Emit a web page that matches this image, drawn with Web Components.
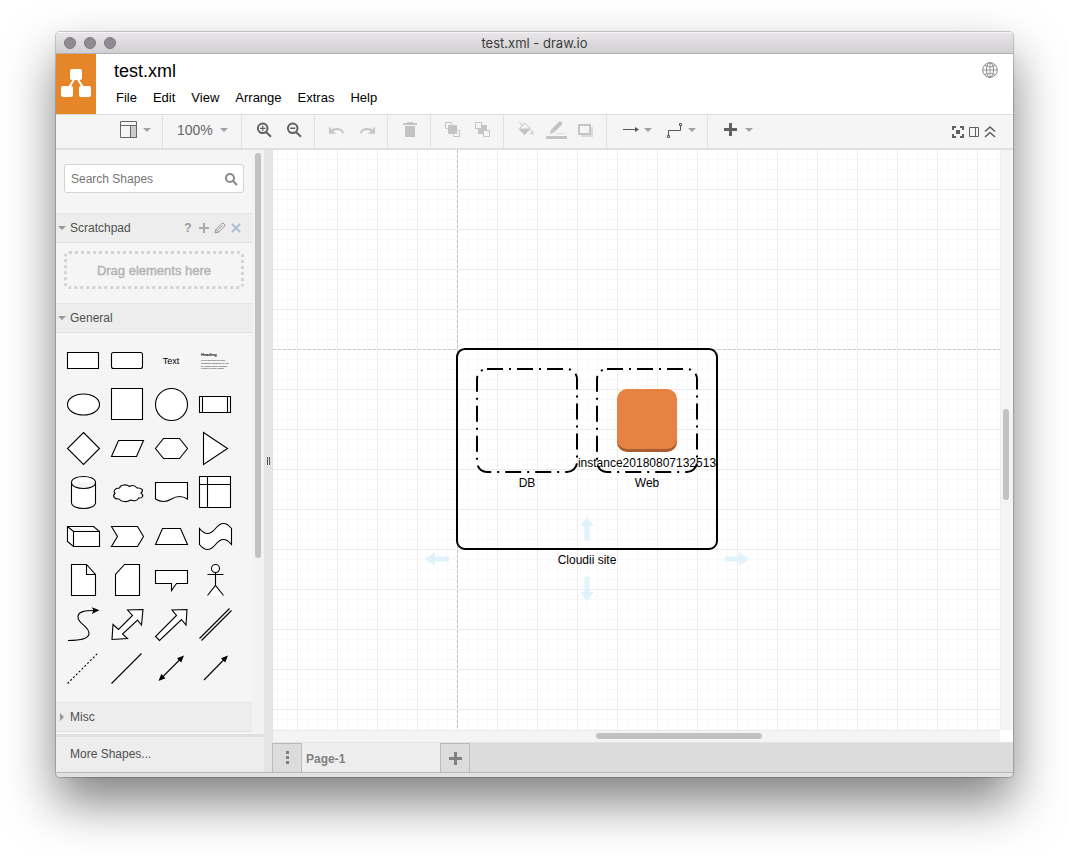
<!DOCTYPE html>
<html lang="en">
<head>
<meta charset="utf-8">
<title>test.xml - draw.io</title>
<style>
  body { margin: 0; background: #fff; font-family: "Liberation Sans", Arial, sans-serif; font-size: 13px; color: #000; }
</style>
</head>
<body>
<app-window>
  <title-bar slot="title">test.xml - draw.io</title-bar>
  <app-header slot="header"></app-header>
  <tool-bar slot="toolbar"></tool-bar>
  <shape-sidebar slot="sidebar"></shape-sidebar>
  <diagram-canvas slot="canvas"></diagram-canvas>
  <page-tabs slot="tabs"></page-tabs>
</app-window>

<script>
const define = (name, html, setup) => {
  const template = document.createElement('template');
  template.innerHTML = html;
  customElements.define(name, class extends HTMLElement {
    constructor() {
      super();
      this.attachShadow({ mode: 'open' });
    }
    connectedCallback() {
      if (this.shadowRoot.childNodes.length) return;
      this.shadowRoot.append(template.content.cloneNode(true));
      if (setup) setup(this, this.shadowRoot);
    }
  });
};

const RESET = `
  *, *::before, *::after { box-sizing: border-box; }
  button, input, select { font: inherit; color: inherit; margin: 0; padding: 0; border: 0; background: none; outline: none; appearance: none; }
  svg { display: block; flex: none; }
`;

const ICONS = {
  panels: '<g fill="none" stroke="#666"><path d="M11.500 5.500h6v12h-6z" fill="#ccc"/><path d="M1.500 1.500h16v16h-16zM1.500 5.500h16M11.500 5.500v12"/></g>',
  zoomin: '<g fill="none" stroke="#606060" stroke-width="2"><circle cx="8.7" cy="8.3" r="4.8"/><path d="M12 12l5 4.8"/></g><path d="M6 8.3h5.4M8.7 5.6v5.4" stroke="#606060" stroke-width="1.2"/>',
  zoomout: '<g fill="none" stroke="#606060" stroke-width="2"><circle cx="8.7" cy="8.3" r="4.8"/><path d="M12 12l5 4.8"/></g><path d="M6.2 8.3h5" stroke="#606060" stroke-width="1.4"/>',
  undo: '<path fill="#c6c6c6" d="M2 6.5v7.3h7l-2.5-2.7c1-.8 2.2-1.2 3.5-1.2 2.6 0 4.8 1.5 5.6 3.8l1.7-.6c-1.1-3.2-3.9-5.3-7.3-5.3-2 0-3.9.7-5.3 1.9z"/>',
  redo: '<path fill="#c6c6c6" d="M18 6.5v7.3h-7l2.5-2.7c-1-.8-2.2-1.2-3.5-1.2-2.6 0-4.8 1.5-5.6 3.8l-1.7-.6c1.1-3.2 3.9-5.3 7.3-5.3 2 0 3.9.7 5.3 1.9z"/>',
  trash: '<path fill="#c4c4c4" d="M7 2h6v1h4v2H3V3h4zM5 6h10v11H5z"/>',
  front: '<g fill="none" stroke="#c4c4c4"><path d="M4.5 8.500h-2v-6h6v2M16.500 10.500v6h-6v-2M14.500 10.500h2"/></g><path fill="#c4c4c4" d="M5 5h9v9H5z"/>',
  back: '<path fill="#c4c4c4" d="M5 5h9v9H5z"/><g fill="#f5f5f5" stroke="#c4c4c4"><path d="M2.500 2.500h6v6h-6zM10.500 10.500h6v6h-6z"/></g>',
  fill: '<path d="M3 1.500l4.500 4.500M4 8L8.500 3l6 5.500" fill="none" stroke="#c4c4c4"/><path fill="#c4c4c4" d="M2 8.500h13l-6.500 6.700z"/><path d="M16 9.500c1 1.300 2 2.200 2 3.400a2 2 0 01-4 0c0-1.200 1-2.100 2-3.400z" fill="#dadada"/>',
  line: '<path fill="#c4c4c4" d="M0 16h21v3H0zM4 14l1.200-4.200L12.800 2c1.500-1.500 4.500 1 3.200 2.800L8.500 12z"/><path d="M10 13.500h8" stroke="#ddd"/>',
  shadow: '<path fill="#dadada" d="M5 7h12v10H5z"/><path d="M3 5h11v9H3z" fill="#f5f5f5" stroke="#c4c4c4" stroke-width="2"/>',
  arrow: '<path d="M3 9.500h14" stroke="#555"/><path d="M15 7v5l4-2.500z" fill="#555"/>',
  route: '<path d="M4.500 15V10.500h12V6" fill="none" stroke="#555"/><path d="M3.500 15.500h2v2h-2zM15.500 3.500h2v2h-2z" fill="#f5f5f5" stroke="#555"/>',
  plus: '<path fill="#606060" d="M8 3h3v5h5v3h-5v5H8v-5H3V8h5z"/>',
  full: '<path fill="#606060" d="M2 2h4v2H4v2H2zM10 2h4v4h-2V4h-2zM2 10h2v2h2v2H2zM12 10h2v4h-4v-2h2zM6 6h4v4H6z"/>',
  format: '<path d="M3.500 3.500h9v9h-9zM9.500 3.500v9" fill="none" stroke="#606060"/>',
  collapse: '<path d="M3 7.500l5-4.500 5 4.500M3 13l5-4.500 5 4.500" fill="none" stroke="#606060" stroke-width="1.600"/>'
};

define('app-window', `
<style>${RESET}
  :host { display: flex; min-height: 100vh; padding: 32px 56px 80px; box-sizing: border-box; }
  .frame { flex: 1; min-width: 0; display: flex; flex-direction: column; border-radius: 4px; overflow: hidden; background: #e2e2e2;
    box-shadow: 0 0 1px 1px rgba(0,0,0,.2), 0 25px 50px rgba(0,0,0,.5); }
  .main { flex: 1; min-height: 0; display: grid; grid-template-columns: 208px 8px minmax(0, 1fr); border-bottom: 1px solid #b8b8b8; }
  .split { background: #e4e4e4; display: flex; align-items: center; justify-content: center; gap: 1px; }
  .split i { width: 1px; height: 8px; background: #555; }
  .right { display: flex; flex-direction: column; min-width: 0; }
  .foot { height: 4px; }
</style>
<div class="frame">
  <slot name="title"></slot><slot name="header"></slot><slot name="toolbar"></slot>
  <div class="main">
    <slot name="sidebar"></slot>
    <div class="split"><i></i><i></i></div>
    <div class="right"><slot name="canvas"></slot><slot name="tabs"></slot></div>
  </div>
  <div class="foot"></div>
</div>`);

define('title-bar', `
<style>${RESET}
  :host { display: grid; grid-template-columns: 1fr auto 1fr; align-items: center; height: 22px; padding: 0 8px; box-sizing: border-box;
    background: linear-gradient(#e9e7e9, #d1cfd1); border-bottom: 1px solid #b1afb1; box-shadow: inset 0 1px #f6f5f6;
    font: 13px Inter, Roboto, sans-serif; color: #3c3c3c; }
  .lights { display: flex; gap: 8px; }
  .lights button { width: 12px; height: 12px; border-radius: 50%; background: #8e8c92; border: 1px solid #7b797f; }
</style>
<div class="lights"><button aria-label="Close"></button><button aria-label="Minimize"></button><button aria-label="Zoom"></button></div>
<span><slot></slot></span>`);

define('app-header', `
<style>${RESET}
  :host { display: flex; height: 61px; background: #fff; border-bottom: 1px solid #dcdcdc; box-sizing: border-box; }
  .logo { width: 40px; height: 60px; background: #e58629; }
  .text { flex: 1; padding: 6px 0 0 18px; }
  h1 { margin: 0 0 6px; font-size: 18px; line-height: 22px; font-weight: 400; }
  nav { display: flex; margin-left: -6px; }
  nav button { padding: 0 8px; line-height: 20px; }
  .lang { width: 16px; height: 16px; margin: 8px 15px 0 0; }
</style>
<svg class="logo" viewBox="0 0 40 60"><path d="M20 22L11 37M20 22l9 15" stroke="#fff" stroke-width="2"/><g fill="#fff"><rect x="14" y="15" width="12" height="11" rx="2"/><rect x="5" y="32" width="12" height="11" rx="2"/><rect x="23" y="32" width="12" height="11" rx="2"/></g></svg>
<div class="text">
  <h1>test.xml</h1>
  <nav><button>File</button><button>Edit</button><button>View</button><button>Arrange</button><button>Extras</button><button>Help</button></nav>
</div>
<button class="lang" aria-label="Language"><svg width="16" height="16" viewBox="0 0 16 16" fill="none" stroke="#888"><circle cx="8" cy="8" r="7.300"/><ellipse cx="8" cy="8" rx="3.500" ry="7.300"/><path d="M8 .7v14.600M.7 8h14.600M2.500 3.500q5.500 3 11 0M2.500 12.500q5.500-3 11 0" stroke-width=".8"/></svg></button>`);

define('tool-button', `
<style>${RESET}
  :host { display: block; }
  button { display: flex; align-items: center; justify-content: center; width: var(--tool-width, 30px); height: 30px; }
  :host([menu]) button { width: 44px; gap: 4px; }
</style>
<button></button>`, (host, root) => {
  const size = host.hasAttribute('small') ? 16 : 20;
  const button = root.querySelector('button');
  button.setAttribute('aria-label', host.getAttribute('label'));
  button.innerHTML = `<svg width="${size}" height="${size}" viewBox="0 0 ${size} ${size}" overflow="visible">${ICONS[host.getAttribute('icon')]}</svg>` +
    (host.hasAttribute('menu') ? '<svg width="8" height="4" viewBox="0 0 8 4"><path d="M0 0h8L4 4z" fill="#a2a2a2"/></svg>' : '');
});

define('tool-bar', `
<style>${RESET}
  :host { display: flex; height: 35px; background: #f5f5f5; border-bottom: 2px solid #e0e0e0; box-sizing: border-box; }
  .group { display: flex; align-items: flex-start; padding: 0 5px 0 7px; border-right: 1px solid #e0e0e0; }
  .group.first { padding-left: 57px; }
  .group.last { border: 0; }
  .zoom { display: flex; align-items: center; width: 66px; height: 30px; padding: 0 8px 0 7px; color: #666; font-size: 14px; }
  .zoom select { flex: 1; height: 20px; }
  .end { display: flex; margin-left: auto; padding: 2px 15px 0 0; --tool-width: 16px; }
</style>
<div class="group first"><tool-button icon="panels" label="View" menu></tool-button></div>
<div class="group"><label class="zoom"><select aria-label="Zoom"><option>100%</option></select><svg width="8" height="4" viewBox="0 0 8 4"><path d="M0 0h8L4 4z" fill="#a2a2a2"/></svg></label></div>
<div class="group"><tool-button icon="zoomin" label="Zoom In"></tool-button><tool-button icon="zoomout" label="Zoom Out"></tool-button></div>
<div class="group"><tool-button icon="undo" label="Undo"></tool-button><tool-button icon="redo" label="Redo"></tool-button></div>
<div class="group"><tool-button icon="trash" label="Delete"></tool-button></div>
<div class="group"><tool-button icon="front" label="To Front"></tool-button><tool-button icon="back" label="To Back"></tool-button></div>
<div class="group"><tool-button icon="fill" label="Fill Color"></tool-button><tool-button icon="line" label="Line Color"></tool-button><tool-button icon="shadow" label="Shadow"></tool-button></div>
<div class="group"><tool-button icon="arrow" label="Connection" menu></tool-button><tool-button icon="route" label="Waypoints" menu></tool-button></div>
<div class="group last"><tool-button icon="plus" label="Insert" menu></tool-button></div>
<div class="end"><tool-button small icon="full" label="Fullscreen"></tool-button><tool-button small icon="format" label="Format"></tool-button><tool-button small icon="collapse" label="Collapse"></tool-button></div>`);

define('palette-section', `
<style>${RESET}
  :host { display: block; }
  header { display: flex; align-items: center; height: 30px; padding: 0 8px 0 2px; background: #ededed; border-top: 1px solid #e5e5e5; border-bottom: 1px solid #e0e0e0; color: #505050; font-size: 12px; }
  .toggle { display: flex; align-items: center; gap: 4px; flex: 1; height: 28px; text-align: left; }
  .toggle svg { transform: rotate(-90deg); }
  :host([open]) .toggle svg { transform: none; }
</style>
<header><button class="toggle"><svg width="8" height="8" viewBox="0 0 8 8"><path d="M0 2h8L4 6z" fill="#999"/></svg><span></span></button><slot name="tools"></slot></header>
<slot></slot>`, (host, root) => { root.querySelector('span').textContent = host.getAttribute('heading'); });

const SHAPES = [
  ['Rectangle', '<path d="M6.5 14.500h31v16h-31z"/>'],
  ['Rounded Rectangle', '<rect x="6.5" y="14.500" width="31" height="16" rx="2"/>'],
  ['Text', '<text x="22" y="26" font-size="9" text-anchor="middle">Text</text>'],
  ['Textbox', '<text x="8" y="18" font-size="4" font-weight="700">Heading</text><g font-size="2"><text x="8" y="23">Lorem ipsum dolor sit amet,</text><text x="8" y="26">consectetur adipisicing elit, sed</text><text x="8" y="28.500">do eiusmod tempor incididunt</text><text x="8" y="31">ut labore et dolore magna.</text></g>'],
  ['Ellipse', '<ellipse cx="22.500" cy="22.500" rx="16" ry="10.500"/>'],
  ['Square', '<path d="M6.5 6.500h31v31h-31z"/>'],
  ['Circle', '<circle cx="22.500" cy="22.500" r="16"/>'],
  ['Process', '<path d="M6.5 14.500h31v16h-31zM9.500 14.500v16M34.500 14.500v16"/>'],
  ['Diamond', '<path d="M22.500 6.500l16 16-16 16-16-16z"/>'],
  ['Parallelogram', '<path d="M13.500 14.500h25l-7 16h-25z"/>'],
  ['Hexagon', '<path d="M14.500 12.500h16l8 10-8 10h-16l-8-10z"/>'],
  ['Triangle', '<path d="M10.500 6.500l24 16-24 16z"/>'],
  ['Cylinder', '<path d="M10.500 12.500c0-8 24-8 24 0v20c0 8-24 8-24 0zM10.500 12.500c0 8 24 8 24 0"/>'],
  ['Cloud', '<path d="M14.500 18c-5 0-6.500 3.500-4.500 5.500-3 2.500-.5 6 4 5.500 2.500 3 8 3.500 11.500 1 4 1.500 7.500.5 8-2 4.500.5 5.500-2.500 2.500-5 3-2.500 1-5.500-4-5-2-2.500-5-3-7.500-1.500-3-2.500-9-2-10 1.500z"/>'],
  ['Document', '<path d="M6.500 12.500h32v16.500q-8-5-16 0t-16 0z"/>'],
  ['Internal Storage', '<path d="M6.500 6.500h31v31h-31zM14.500 6.500v31M6.500 14.500h31"/>'],
  ['Cube', '<path d="M6.500 12.500h26l6 5v15h-26l-6-5zM6.500 12.500l6 5h26M12.500 17.500v15"/>'],
  ['Step', '<path d="M6.500 12.500h26l6 10-6 10h-26l6-10z"/>'],
  ['Trapezoid', '<path d="M13.500 14.500h18l7 16h-32z"/>'],
  ['Tape', '<path d="M6.500 14.500q8 10 16 0t16 0v16q-8-10-16 0t-16 0z"/>'],
  ['Note', '<path d="M10.500 6.500h15l9 10v21h-24zM25.500 6.500v10h9"/>'],
  ['Card', '<path d="M19.500 6.500h15v31h-24v-21z"/>'],
  ['Callout', '<path d="M6.500 12.500h32v13h-11l-5 7v-7h-16z"/>'],
  ['Actor', '<circle cx="22.500" cy="10.500" r="4"/><path d="M22.500 14.500v13M14.500 16.500h16M14.500 37.500l8-10 8 10"/>'],
  ['Curve', '<path fill="none" d="M7 38.500C22 38.500 28 36 28 31.500 28 24 17 22 17 15 17 10 22 8.500 34 8.500"/><path fill="#000" d="M37 8.300l-5-2 1.200 2.200-1.200 2.200z"/>'],
  ['Bidirectional Arrow', '<path d="M38 7.500l-1.500 15.500-4-5L17.500 32l5 4.500L7 37.500l1-15 5.500 5 14-14-5-5.500z"/>'],
  ['Arrow', '<path d="M38 7.500l-1 15.500-4.500-5.500-22 21-4-4 21-21-4.500-5.500z"/>'],
  ['Link', '<path d="M6.500 36.500l30-30M8.500 38.500l30-30"/>'],
  ['Dashed Line', '<path d="M6.500 37.500l30-30" stroke-dasharray="2 2"/>'],
  ['Line', '<path d="M6.500 37.500l30-30"/>'],
  ['Bidirectional Connector', '<path d="M11 33.500l22.500-22.500"/><path fill="#000" d="M34 10.500l-5 2 3 3zM10.500 34l5-2-3-3z"/>'],
  ['Directional Connector', '<path d="M11 34l22.500-23"/><path fill="#000" d="M34 10.500l-5 2 3 3z"/>']
];

define('shape-palette', `
<style>${RESET}
  :host { display: block; padding: 5px 5px 12px; }
  div { display: grid; grid-template-columns: repeat(4, 44px); grid-auto-rows: 44px; }
  svg { fill: #fff; stroke: #000; stroke-width: 1.1; }
  text { fill: #000; stroke: none; font-family: "Liberation Sans", Arial, sans-serif; }
</style>
<div></div>`, (host, root) => {
  root.querySelector('div').innerHTML = SHAPES.map(([name, art]) =>
    `<button aria-label="${name}"><svg width="44" height="44" viewBox="0 0 44 44">${art}</svg></button>`).join('');
});

define('shape-sidebar', `
<style>${RESET}
  :host { display: flex; flex-direction: column; min-width: 0; min-height: 0; background: #f5f5f5; }
  .scroll { flex: 1; display: grid; grid-template-columns: minmax(0, 1fr) 12px; }
  .track { background: #f2f2f2; padding: 3px; }
  .track i { display: block; height: 70%; border-radius: 3px; background: #c2c2c2; }
  .search { display: flex; align-items: center; height: 29px; margin: 14px 8px 20px; padding: 0 5px 0 6px; background: #fff; border: 1px solid #d3d3d3; border-radius: 3px; font-size: 12px; }
  .search input { flex: 1; min-width: 0; height: 20px; }
  .search input::placeholder { color: #757575; opacity: 1; }
  .tools { display: flex; }
  .tools button { width: 16px; height: 16px; display: grid; place-items: center; color: #999; font-weight: 700; }
  .drop { display: grid; place-items: center; height: 38px; margin: 8px 8px 14px; border: 3px dotted #d3d3d3; border-radius: 5px; color: #b2b2b2; -webkit-text-stroke: 0.4px #b2b2b2; }
  .more { height: 38px; padding: 0 14px 2px; border-top: 3px solid #e0e0e0; background: #ededed; color: #505050; font-size: 12px; text-align: left; }
  .gap { height: 2px; }
</style>
<div class="scroll">
  <div>
    <label class="search"><input type="text" placeholder="Search Shapes" aria-label="Search Shapes"><svg width="14" height="14" viewBox="0 0 14 14" fill="none" stroke="#888" stroke-width="2"><circle cx="6" cy="6" r="4"/><path d="M9 9l4 4"/></svg></label>
    <palette-section heading="Scratchpad" open>
      <div class="tools" slot="tools">
        <button aria-label="Help">?</button>
        <button aria-label="Add"><svg width="12" height="12" viewBox="0 0 12 12"><path d="M6 1v10M1 6h10" stroke="#aaa" stroke-width="2"/></svg></button>
        <button aria-label="Edit"><svg width="12" height="12" viewBox="0 0 12 12" fill="none" stroke="#999"><path d="M1 11l.8-3.500L8 1.300c1-1 3.700 1.500 2.700 2.700L4.500 10.200zM3 8.800l5.500-5.500M1.800 7.500l2.700 2.700"/></svg></button>
        <button aria-label="Close"><svg width="10" height="10" viewBox="0 0 10 10"><path d="M1 1l8 8M9 1L1 9" stroke="#a9c0d4" stroke-width="2"/></svg></button>
      </div>
      <div class="drop">Drag elements here</div>
    </palette-section>
    <palette-section heading="General" open><shape-palette></shape-palette></palette-section>
    <palette-section heading="Misc"></palette-section>
    <div class="gap"></div>
  </div>
  <div class="track"><i></i></div>
</div>
<button class="more">More Shapes...</button>`);

define('diagram-canvas', `
<style>${RESET}
  :host { flex: 1; min-height: 0; display: grid; grid-template: minmax(0, 1fr) 12px / minmax(0, 1fr) 13px; border-left: 1px solid #e4e4e4; background: #fff; }
  .paper { position: relative; overflow: hidden; background:
    repeating-linear-gradient(90deg, #c8c8c8 0 3px, transparent 3px 5px) 0 199px / 100% 1px no-repeat,
    repeating-linear-gradient(#c0c0c0 0 3px, transparent 3px 5px) 184px 0 / 1px 100% no-repeat,
    linear-gradient(90deg, #ececec 1px, transparent 1px) 24px 39px / 40px 40px,
    linear-gradient(#ececec 1px, transparent 1px) 24px 39px / 40px 40px,
    linear-gradient(90deg, #f8f8f8 1px, transparent 1px) 4px 9px / 10px 10px,
    linear-gradient(#f8f8f8 1px, transparent 1px) 4px 9px / 10px 10px; }
  .paper svg { position: absolute; left: 144px; top: 190px; }
  text { font: 12px "Liberation Sans", Arial, sans-serif; text-anchor: middle; }
  .v, .h { background: #f4f4f4; display: flex; padding: 3px; }
  .v { border-left: 1px solid #ececec; padding: 0 4px 0 2px; flex-direction: column; }
  .h { border-top: 1px solid #ececec; padding: 2px 0 3px; }
  .v i { flex: 0 0 91px; border-radius: 3px; background: #c2c2c2; }
  .h i { flex: 0 0 166px; border-radius: 3px; background: #c2c2c2; }
  .v::before { content: ""; flex: 0 1 259px; }
  .h::before { content: ""; flex: 0 1 323px; }
</style>
<div class="paper">
  <svg width="340" height="270" viewBox="0 0 340 270">
    <rect x="40" y="9" width="260" height="200" rx="8" fill="none" stroke="#000" stroke-width="2"/>
    <g fill="none" stroke="#000" stroke-width="2" stroke-dasharray="16 6 2 6"><rect x="60" y="29" width="100" height="103" rx="10"/><rect x="180" y="29" width="100" height="103" rx="10"/></g>
    <rect x="200" y="52" width="60" height="60" rx="10" fill="#a95e31"/><rect x="200" y="49" width="60" height="60" rx="10" fill="#e88243"/>
    <g fill="#e0f2fc"><path d="M170 177l7 9h-4.500v15h-5v-15H163zM170 261l-7-9h4.500v-15h5v15h4.500zM8 219l10-7v4.500h14v5H18v4.500zM332 219l-10-7v4.500h-14v5h14v4.500z"/></g>
    <text x="110" y="147">DB</text><text x="230" y="147">Web</text><text x="230" y="127">instance20180807132513</text><text x="170" y="224">Cloudii site</text>
  </svg>
</div>
<div class="v"><i></i></div>
<div class="h"><i></i></div>`);

define('page-tabs', `
<style>${RESET}
  :host { display: flex; height: 30px; background: #dcdcdc; border-top: 1px solid #e4e4e4; box-sizing: border-box; }
  button { display: grid; place-items: center; width: 30px; border: 1px solid #bbb; border-bottom: 0; }
  .page { width: 138px; border: 0; background: #eee; color: #808080; font-size: 12px; font-weight: 700; justify-content: start; padding: 2px 0 0 4px; }
</style>
<button aria-label="Pages"><svg width="4" height="14" viewBox="0 0 4 14"><path d="M1 0h3v3H1zM1 5h3v3H1zM1 10h3v3H1z" fill="#808080"/></svg></button>
<button class="page">Page-1</button>
<button aria-label="Insert Page"><svg width="13" height="13" viewBox="0 0 13 13"><path d="M5 0h3v5h5v3H8v5H5V8H0V5h5z" fill="#808080"/></svg></button>`);
</script>
</body>
</html>
